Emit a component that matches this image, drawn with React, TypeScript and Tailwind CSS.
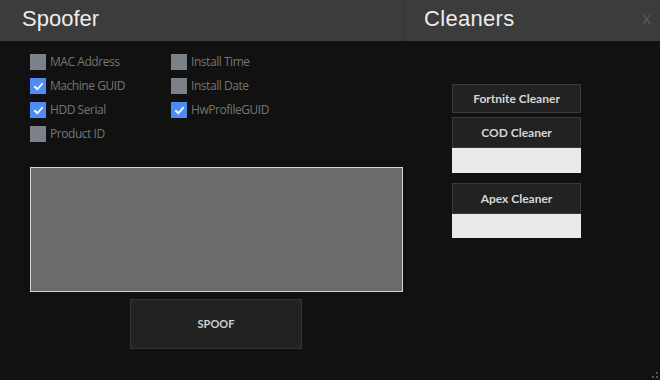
import React from "react";

const Check = ({ checked }: { checked: boolean }) => (
  <div
    className={`w-[16px] h-[16px] flex items-center justify-center ${checked ? "bg-[#4d8df2]" : "bg-[#7b8189]"}`}
  >
    {checked && (
      <svg width="11" height="11" viewBox="0 0 12 12">
        <path d="M2 6.3 L4.8 9 L10 3" stroke="#ffffff" strokeWidth="2" fill="none" strokeLinecap="round" strokeLinejoin="round" />
      </svg>
    )}
  </div>
);

const Item = ({ label, checked }: { label: string; checked: boolean }) => (
  <div className="h-[24px] flex items-center gap-[4px]">
    <Check checked={checked} />
    <span className="text-[12px] text-[#767676] tracking-[-0.45px]" style={{ fontFamily: '"Open Sans", "Liberation Sans", sans-serif' }}>
      {label}
    </span>
  </div>
);

const Btn = ({ label, h }: { label: string; h: string }) => (
  <div className={`w-[129px] ${h} bg-[#222222] border border-[#3a3a3a] flex items-center justify-center text-[12px] font-bold text-[#d6d6d6]`} style={{ fontFamily: 'Lato, "Liberation Sans", sans-serif' }}>
    {label}
  </div>
);

export default function App() {
  return (
    <div className="relative w-[660px] h-[380px] bg-[#111111] overflow-hidden" style={{ fontFamily: '"Liberation Sans", Arial, sans-serif' }}>
      <div className="flex h-[41px] bg-[#3c3c3c]">
        <div className="w-[404px] border-r border-[#333333] pl-[22px] text-[22px] leading-[38px] text-[#ececec]">Spoofer</div>
        <div className="flex-1 flex pl-[20px] text-[22px] leading-[38px] text-[#ececec]">
          <span className="tracking-[0.3px]">Cleaners</span>
          <span className="ml-auto mr-[9px] text-[13px] leading-[40px] text-[#5e5e5e]">X</span>
        </div>
      </div>
      <div className="flex">
        <div className="w-[404px] pl-[30px] pt-[9px]">
          <div className="grid grid-cols-[141px_auto]">
            <Item label="MAC Address" checked={false} />
            <Item label="Install Time" checked={false} />
            <Item label="Machine GUID" checked={true} />
            <Item label="Install Date" checked={false} />
            <Item label="HDD Serial" checked={true} />
            <Item label="HwProfileGUID" checked={true} />
            <Item label="Product ID" checked={false} />
          </div>
          <div className="mt-[21px] w-[373px] h-[125px] bg-[#6b6b6b] border border-[#d4d4d4]" />
          <div className="mt-[7px] ml-[100px] w-[172px] h-[50px] bg-[#222222] border border-[#363636] flex items-center justify-center text-[11px] font-bold text-[#d0d0d0]" style={{ fontFamily: 'Lato, "Liberation Sans", sans-serif' }}>
            SPOOF
          </div>
        </div>
        <div className="pl-[48px] pt-[43px] flex flex-col">
          <Btn label="Fortnite Cleaner" h="h-[29px]" />
          <div className="mt-[4px]">
            <Btn label="COD Cleaner" h="h-[31px]" />
          </div>
          <div className="w-[129px] h-[25px] bg-[#e9e9e9]" />
          <div className="mt-[10px]">
            <Btn label="Apex Cleaner" h="h-[31px]" />
          </div>
          <div className="w-[129px] h-[24px] bg-[#e9e9e9]" />
        </div>
      </div>
      <svg className="absolute right-[2px] bottom-[2px]" width="6" height="6" viewBox="0 0 6 6">
        <rect x="4" y="0" width="2" height="2" fill="#555" />
        <rect x="0" y="4" width="2" height="2" fill="#555" />
        <rect x="4" y="4" width="2" height="2" fill="#555" />
      </svg>
    </div>
  );
}
